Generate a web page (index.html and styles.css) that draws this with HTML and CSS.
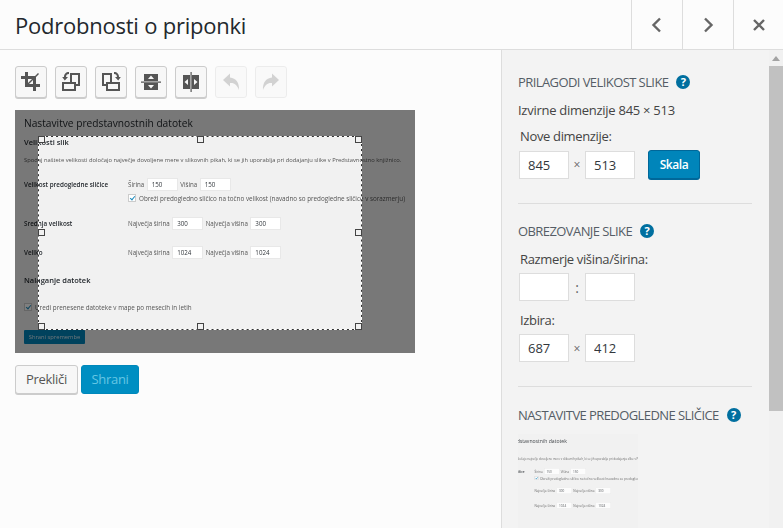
FILE: index.html
```html
<!DOCTYPE html>
<html lang="sl">
<head>
<meta charset="utf-8">
<title>Podrobnosti o priponki</title>
<link rel="stylesheet" href="styles.css">
</head>
<body>
<div class="modal">
  <header class="top">
    <h1 class="top-title">Podrobnosti o priponki</h1>
    <button class="nav"><svg width="20" height="20" viewBox="0 0 20 20"><path class="chev" d="M13 3.5 6.5 10l6.500 6.500"/></svg></button>
    <button class="nav"><svg width="20" height="20" viewBox="0 0 20 20"><path class="chev" d="M7 3.500 13.500 10 7 16.500"/></svg></button>
    <button class="nav"><svg width="20" height="20" viewBox="0 0 20 20"><path class="chev" d="M5 5l10 10M15 5 5 15"/></svg></button>
  </header>
  <div class="body">
    <main class="editor">
      <div class="tools">
        <button class="tool"><svg class="ico" viewBox="0 0 20 20"><path d="M19 12v3h-4v4h-3v-4H4V7H0V4h4V0h3v4h7l3-3 1 1-3 3v7h4zm-8-5H7v4zm-3 5h4V8z"/></svg></button>
        <button class="tool"><svg class="ico" viewBox="0 0 20 20"><path fill-rule="evenodd" d="M7 5H5.050c0-1.740.85-2.900 2.950-2.900V0C4.850 0 2.960 2.110 2.960 5H1.180L3.800 8.390zM19 1v13h-4v5H1V10h8V1h10zm-2 2h-6v7h4v2h2V3zm-4 9H3v5h10v-5z"/></svg></button>
        <button class="tool"><svg class="ico" viewBox="0 0 20 20"><path fill-rule="evenodd" d="M15.950 5H14l3.200 3.390L19.820 5h-1.780c0-2.890-1.890-5-5.040-5v2.100c2.100 0 2.950 1.160 2.970 2.900zM1 1h10v9h8v9H5v-5H1V1zm2 2v9h2v-2h4V3H3zm4 9v5h10v-5H7z"/></svg></button>
        <button class="tool"><svg class="ico" viewBox="0 0 20 20"><path fill-rule="evenodd" d="M3 2h14v7H3zM10 3.500 7 7h6zM0 9.500h20v1.200H0zM3 11h14v7H3zM10 16.500 13 13H7z"/></svg></button>
        <button class="tool"><svg class="ico" viewBox="0 0 20 20"><path fill-rule="evenodd" d="M2 3h7v14H2zM3.500 10 7 13V7zM9.500 0h1.200v20H9.500zM11 3h7v14h-7zM16.500 10 13 7v6z"/></svg></button>
        <button class="tool off"><svg class="ico" viewBox="0 0 20 20"><path d="M9 1.500 2 8l7 6.500V11c4-.5 7 1.500 9 7 .5-7-3-12-9-12.500z"/></svg></button>
        <button class="tool off"><svg class="ico" viewBox="0 0 20 20"><path d="M11 1.500 18 8l-7 6.500V11c-4-.5-7 1.500-9 7-.5-7 3-12 9-12.500z"/></svg></button>
      </div>
      <div class="picture">
        <div class="shot">
          <h2 class="s-title">Nastavitve predstavnostnih datotek</h2>
          <h3 class="s-head">Velikosti slik</h3>
          <p class="s-desc">Spodaj naštete velikosti določajo največje dovoljene mere v slikovnih pikah, ki se jih uporablja pri dodajanju slike v Predstavnostno knjižnico.</p>
          <div class="s-row s-row-a">
            <b class="s-key">Velikost predogledne sličice</b>
            <div>
              <div class="s-line"><span class="s-lab">Širina</span><span class="s-in">150</span><span class="s-lab">Višina</span><span class="s-in">150</span></div>
              <div class="s-check"><i class="s-box"></i>Obreži predogledno sličico na točno velikost (navadno so predogledne sličice v sorazmerju)</div>
            </div>
          </div>
          <div class="s-row s-row-b">
            <b class="s-key">Srednja velikost</b>
            <div class="s-line"><span class="s-lab">Največja širina</span><span class="s-in">300</span><span class="s-lab">Največja višina</span><span class="s-in">300</span></div>
          </div>
          <div class="s-row s-row-c">
            <b class="s-key">Veliko</b>
            <div class="s-line"><span class="s-lab">Največja širina</span><span class="s-in">1024</span><span class="s-lab">Največja višina</span><span class="s-in">1024</span></div>
          </div>
          <h3 class="s-head s-head-2">Nalaganje datotek</h3>
          <div class="s-check s-check-2"><i class="s-box"></i>Uredi prenesene datoteke v mape po mesecih in letih</div>
          <span class="s-btn">Shrani spremembe</span>
        </div>
        <div class="sel">
          <i class="h h-tl"></i><i class="h h-tm"></i><i class="h h-tr"></i>
          <i class="h h-ml"></i><i class="h h-mr"></i>
          <i class="h h-bl"></i><i class="h h-bm"></i><i class="h h-br"></i>
        </div>
      </div>
      <div class="actions">
        <button class="btn">Prekliči</button>
        <button class="btn primary">Shrani</button>
      </div>
    </main>
    <aside class="side">
      <div class="side-in">
        <section class="sec sec-1">
          <h4 class="sec-head">Prilagodi velikost slike<span class="help">?</span></h4>
          <p class="orig">Izvirne dimenzije 845 × 513</p>
          <label class="lab lab-1">Nove dimenzije:</label>
          <div class="fields">
            <input class="inp" value="845"><span class="sep">×</span><input class="inp" value="513">
            <button class="scale">Skala</button>
          </div>
        </section>
        <section class="sec sec-2">
          <h4 class="sec-head">Obrezovanje slike<span class="help">?</span></h4>
          <label class="lab lab-2">Razmerje višina/širina:</label>
          <div class="fields">
            <input class="inp"><span class="sep colon">:</span><input class="inp">
          </div>
          <label class="lab lab-3">Izbira:</label>
          <div class="fields">
            <input class="inp" value="687"><span class="sep">×</span><input class="inp" value="412">
          </div>
        </section>
        <section class="sec sec-3">
          <h4 class="sec-head">Nastavitve predogledne sličice<span class="help">?</span></h4>
          <div class="thumb">
            <div class="shot shot-thumb">
              <h2 class="s-title">Nastavitve predstavnostnih datotek</h2>
              <h3 class="s-head">Velikosti slik</h3>
              <p class="s-desc">Spodaj naštete velikosti določajo največje dovoljene mere v slikovnih pikah, ki se jih uporablja pri dodajanju slike v Predstavnostno knjižnico.</p>
              <div class="s-row s-row-a">
                <b class="s-key">Velikost predogledne sličice</b>
                <div>
                  <div class="s-line"><span class="s-lab">Širina</span><span class="s-in">150</span><span class="s-lab">Višina</span><span class="s-in">150</span></div>
                  <div class="s-check"><i class="s-box"></i>Obreži predogledno sličico na točno velikost (navadno so predogledne sličice v sorazmerju)</div>
                </div>
              </div>
              <div class="s-row s-row-b">
                <b class="s-key">Srednja velikost</b>
                <div class="s-line"><span class="s-lab">Največja širina</span><span class="s-in">300</span><span class="s-lab">Največja višina</span><span class="s-in">300</span></div>
              </div>
              <div class="s-row s-row-c">
                <b class="s-key">Veliko</b>
                <div class="s-line"><span class="s-lab">Največja širina</span><span class="s-in">1024</span><span class="s-lab">Največja višina</span><span class="s-in">1024</span></div>
              </div>
            </div>
          </div>
        </section>
      </div>
      <div class="scrollbar"><div class="sb-arrow"></div><div class="sb-thumb"></div></div>
    </aside>
  </div>
</div>
</body>
</html>
```
FILE: styles.css
```css
* { box-sizing: border-box; }
html, body { margin: 0; height: 100%; overflow: hidden; }
body { font-family: "Open Sans", sans-serif; color: #444; background: #fcfcfc; }
.modal { display: flex; flex-direction: column; height: 528px; }

.top { display: flex; height: 50px; border-bottom: 1px solid #ddd; background: #fcfcfc; flex: none; }
.top-title { flex: 1; margin: 0; padding-left: 15px; font-size: 22px; font-weight: 400; line-height: 50px; letter-spacing: -.23px; color: #23282d; }
.nav { width: 51px; height: 49px; padding: 0; border: 0; border-left: 1px solid #ddd; background: transparent; display: flex; align-items: center; justify-content: center; }
.nav:last-child { width: 50px; }
.chev { fill: none; stroke: #666; stroke-width: 2.4; }

.body { flex: 1; display: flex; min-height: 0; }
.editor { width: 501px; padding: 16px 15px 0; flex: none; }
.tools { display: flex; gap: 8px; }
.tool { width: 32px; height: 32px; padding: 0; border: 1px solid #ccc; border-radius: 3px; background: #f7f7f7; box-shadow: 0 1px 0 #ccc; display: flex; align-items: center; justify-content: center; }
.tool.off { opacity: .5; border-color: #ddd; box-shadow: none; }
.tool.off .ico { fill: #aaa; }
.ico { width: 20px; height: 20px; fill: #555; }

.picture { position: relative; width: 400px; height: 243px; margin-top: 12px; overflow: hidden; background: #f1f1f1; }
.shot { width: 400px; height: 243px; padding: 4px 9px 0; font-size: 6.2px; color: #555; background: #f1f1f1; overflow: hidden; filter: blur(.25px); }
.s-title { margin: 0; font-size: 10.2px; font-weight: 400; line-height: 18px; color: #23282d; }
.s-head { margin: 5px 0 0; font-size: 7.500px; font-weight: 600; line-height: 11px; color: #23282d; }
.s-head-2 { margin-top: 16px; }
.s-desc { margin: 8px 0 0; line-height: 9px; white-space: nowrap; font-size: 5.800px; }
.s-row { display: grid; grid-template-columns: 104px 1fr; }
.s-row-a { margin-top: 13px; }
.s-row-b { margin-top: 14px; }
.s-row-c { margin-top: 16px; }
.s-key { font-weight: 600; font-size: 6.300px; line-height: 13px; color: #23282d; }
.s-line { display: flex; align-items: center; gap: 2.500px; height: 13px; white-space: nowrap; }
.s-lab { color: #555; }
.s-in { flex: none; width: 31px; height: 13px; padding-left: 4px; line-height: 12px; background: #fff; border: 1px solid #e8e8e8; color: #32373c; }
.s-check { display: flex; align-items: center; gap: 3px; height: 10px; margin-top: 2px; white-space: nowrap; font-size: 6.300px; }
.s-box { width: 8px; height: 8px; background: #fff; border: 1px solid #ccc; position: relative; flex: none; }
.s-box::after { content: ""; position: absolute; left: 1.500px; top: 0; width: 2px; height: 4px; border: solid #1e8cbe; border-width: 0 1px 1px 0; transform: rotate(40deg); }
.s-check-2 { margin-top: 16px; }
.s-btn { display: block; width: 61px; height: 14px; margin-top: 18px; border-radius: 1px; background: #0085ba; color: #d5e9f2; font-size: 5.800px; line-height: 14px; text-align: center; white-space: nowrap; }

.sel { position: absolute; left: 23px; top: 26px; width: 324px; height: 194px; box-shadow: 0 0 0 500px rgba(0,0,0,.5); }
.sel::before, .sel::after { content: ""; position: absolute; inset: 0; }
.sel::before { border: 1px solid #333; }
.sel::after { border: 1px dashed #fff; }
.h { position: absolute; z-index: 1; width: 7px; height: 7px; border: 1px solid #444; background: #f1f1f1; }
.h-tl { left: 0; top: 0; }
.h-tm { left: 159px; top: 0; }
.h-tr { right: 0; top: 0; }
.h-ml { left: 0; top: 93px; }
.h-mr { right: 0; top: 93px; }
.h-bl { left: 0; bottom: 0; }
.h-bm { left: 159px; bottom: 0; }
.h-br { right: 0; bottom: 0; }

.actions { display: flex; gap: 3px; margin-top: 12px; }
.btn { height: 29px; width: 63px; padding: 0; font: 400 13px/27px "Open Sans", sans-serif; letter-spacing: -.3px; color: #555; background: #f7f7f7; border: 1px solid #ccc; border-radius: 3px; box-shadow: 0 1px 0 #ccc; }
.btn.primary { width: 58px; color: #66c6e4; background: #008ec2; border-color: #0088bb; box-shadow: none; }

.side { flex: 1; display: flex; min-width: 0; overflow: hidden; background: #f3f3f3; border-left: 1px solid #ddd; }
.side-in { flex: 1; min-width: 0; padding: 0 17px 0 16px; overflow: hidden; }
.sec { border-bottom: 1px solid #ddd; }
.sec-1 { padding-top: 22px; height: 154px; }
.sec-2 { padding-top: 17px; height: 183px; }
.sec-3 { padding-top: 18px; border: 0; }
.sec-head { display: flex; align-items: center; margin: 0; font-size: 13px; font-weight: 400; line-height: 20px; letter-spacing: -.58px; text-transform: uppercase; color: #555d66; white-space: nowrap; }
.help { flex: none; width: 14px; height: 14px; margin-left: 8px; border-radius: 50%; background: #006f9f; color: #fff; font-size: 11px; font-weight: 700; line-height: 14px; letter-spacing: 0; text-align: center; text-transform: none; }
.orig { margin: 8px 0 0; font-size: 13px; line-height: 20px; letter-spacing: -.27px; color: #444; }
.lab { display: block; padding-left: 2px; font-size: 13px; line-height: 20px; letter-spacing: -.35px; color: #444; }
.lab-1 { margin-top: 6px; }
.lab-2 { margin-top: 8px; }
.lab-3 { margin-top: 9px; }
.fields { display: flex; align-items: center; margin: 4px 0 0 1px; }
.inp { width: 50px; height: 28px; padding: 0 8px; border: 1px solid #ddd; background: #fff; font: 400 13px "Open Sans", sans-serif; color: #32373c; box-shadow: none; border-radius: 0; outline: 0; }
.sep { width: 16px; text-align: center; font-size: 12px; color: #666; }
.colon { font-size: 14px; }
.scale { width: 52px; height: 29px; margin-left: 13px; padding: 0; border: 1px solid #006799; border-radius: 3px; background: #0085ba; box-shadow: 0 1px 0 #006799; color: #fff; font: 600 12px "Open Sans", sans-serif; letter-spacing: -.4px; }
.thumb { position: relative; width: 120px; height: 100px; margin-top: 9px; overflow: hidden; background: #f1f1f1; }
.shot-thumb { transform-origin: 0 0; transform: translateX(-40px) scale(.5); filter: blur(.5px); opacity: .85; }

.scrollbar { width: 14px; flex: none; background: #f1f1f1; }
.sb-arrow { width: 0; height: 0; margin: 6px auto 5px; border: 4px solid transparent; border-top: 0; border-bottom: 5px solid #a3a3a3; }
.sb-thumb { height: 345px; background: #c1c1c1; }
```
